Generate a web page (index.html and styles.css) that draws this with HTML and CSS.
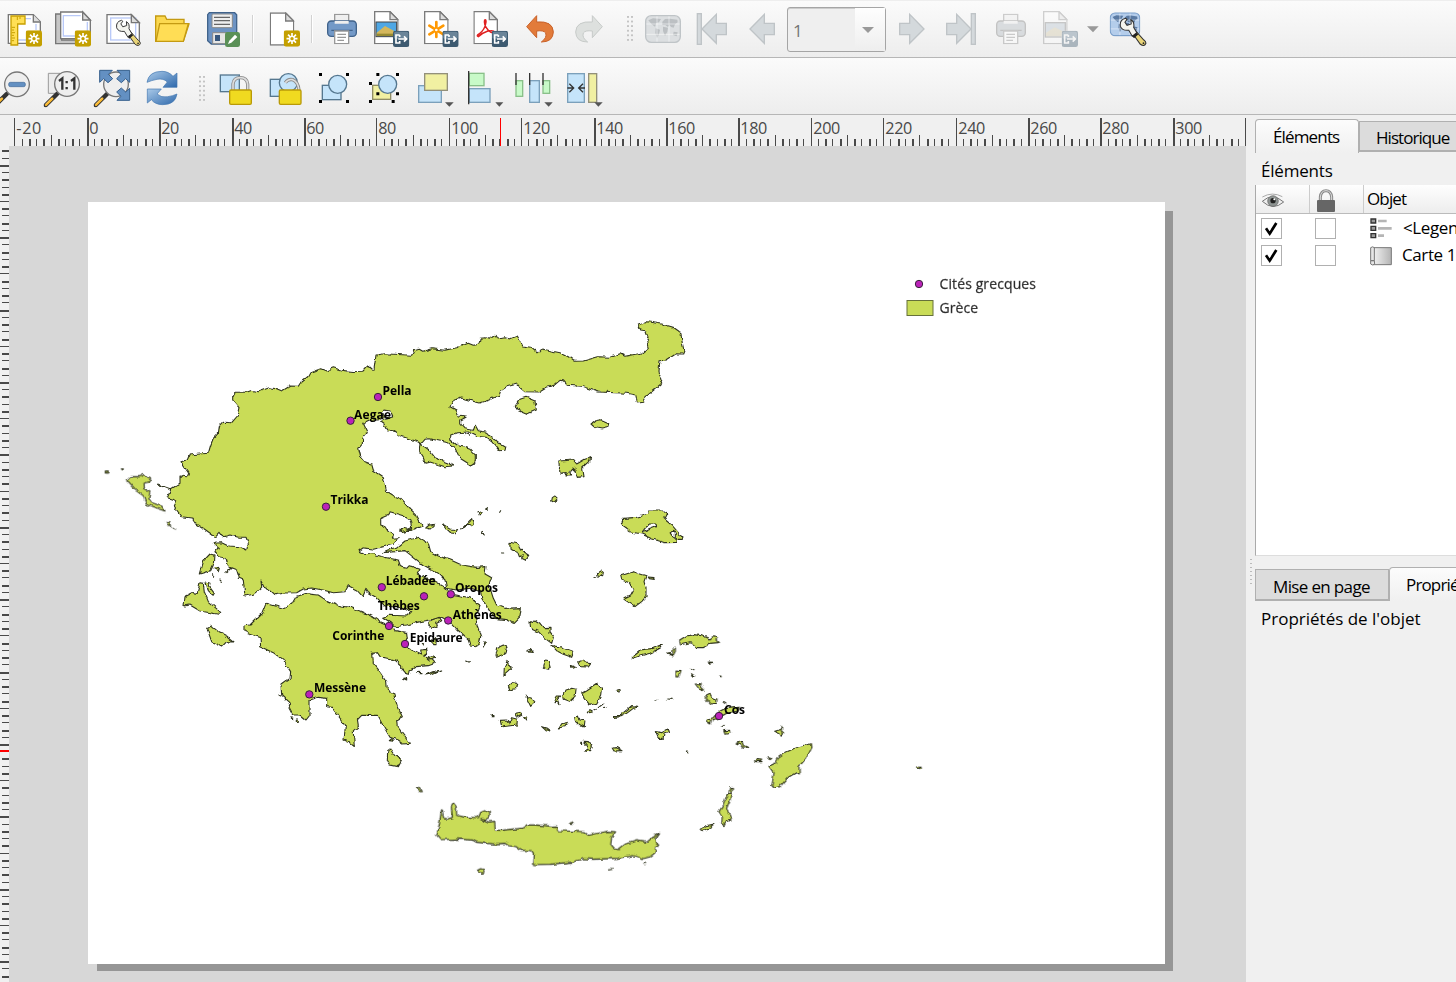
FILE: index.html
```html
<!DOCTYPE html>
<html lang="fr">
<head>
<meta charset="utf-8">
<title>Mise en page</title>
<link rel="stylesheet" href="styles.css">
</head>
<body>
<svg class="defs" width="0" height="0">
  <defs>
    <linearGradient id="gSync" x1="0" y1="0" x2="1" y2="1"><stop offset="0" stop-color="#a9c9e8"/><stop offset="1" stop-color="#2f69ac"/></linearGradient>
    <linearGradient id="gRoll" x1="0" x2="1"><stop offset="0" stop-color="#f4f4f4"/><stop offset="1" stop-color="#b4b4b4"/></linearGradient>
    <filter id="coast" filterUnits="userSpaceOnUse" x="88" y="300" width="860" height="600" color-interpolation-filters="sRGB"><feTurbulence type="fractalNoise" baseFrequency="0.16" numOctaves="2" seed="4" result="n"/><feDisplacementMap in="SourceGraphic" in2="n" scale="4.500" xChannelSelector="R" yChannelSelector="G"/></filter>
    <symbol id="star" viewBox="0 0 49 49"><rect width="49" height="49" rx="7" fill="#c4a000"/><path d="M25 8V41M8.500 25H41.500M13 13L37 37M37 13L13 37" stroke="#fff" stroke-width="5"/><circle cx="25" cy="25" r="9" fill="#fff"/><circle cx="25" cy="25" r="5" fill="#c4a000"/></symbol>
    <symbol id="export" viewBox="0 0 49 49"><rect width="49" height="49" rx="7" fill="#3d5a70"/><rect x="3" y="3" width="43" height="22" rx="5" fill="#6b8599"/><path d="M20 13H9V37H20V31M20 13V19M16 25H39M33 17L41 25L33 33" fill="none" stroke="#fff" stroke-width="5"/></symbol>
    <symbol id="wrench" viewBox="0 0 80 86"><path d="M30 36L60 78Q72 86 76 75Q76 70 70 66L38 30Z" fill="#e9d478" stroke="#333" stroke-width="3"/><path d="M3 27Q0 8 18 4L22 7L16 15L22 24L34 20L33 8Q44 14 41 30L50 45L37 55L27 38Q8 40 3 27Z" fill="#f4f4ee" stroke="#333" stroke-width="3"/><path d="M37 55L50 45L54 50L42 61Z" fill="#222"/><circle cx="69" cy="75" r="2.500" fill="#222"/></symbol>
    <symbol id="page" viewBox="0 0 74 100"><path d="M2 2H48L72 26V98H2Z" fill="#fff" stroke="#7b7b7b" stroke-width="4"/><path d="M48 2V26H72Z" fill="#ddd" stroke="#7b7b7b" stroke-width="4"/></symbol>
    <symbol id="handle" viewBox="0 0 50 50"><path d="M6 44L40 10" stroke="#333" stroke-width="13" stroke-linecap="round"/><path d="M7 43L26 24" stroke="#fdb92c" stroke-width="7" stroke-linecap="round"/><path d="M5 41L25 21" stroke="#ffe08b" stroke-width="2"/></symbol>
    <symbol id="world" viewBox="0 0 108 84"><rect x="2" y="2" width="104" height="80" rx="17" fill="var(--sea)" stroke="var(--rim)" stroke-width="4"/><path d="M10 16L24 10 48 12 42 22 34 24 30 35 20 28ZM32 40L45 44 42 58 36 70 31 54ZM52 20L60 12 75 11 97 14 98 22 90 28 86 38 78 36 74 30 69 36 61 30 52 30ZM54 35L69 38 67 50 60 63 54 48ZM86 50L98 52 95 64 84 60Z" fill="var(--land)"/><path d="M4 27H104M4 58H104M36 4V80M72 4V80" stroke="#fff" stroke-width="2" opacity=".8"/></symbol>
    <symbol id="printer" viewBox="0 0 92 92"><rect x="24" y="2" width="42" height="34" fill="#efefef" stroke="#999" stroke-width="4"/><rect x="3" y="22" width="86" height="46" rx="11" fill="var(--body)" stroke="var(--edge)" stroke-width="4"/><path d="M24 22H66V30H24Z" fill="#eee"/><path d="M14 50H78" stroke="var(--edge)" stroke-width="4"/><path d="M24 52H66V90H24Z" fill="#fff" stroke="#999" stroke-width="4"/><path d="M32 62H58M32 71H58M32 80H52" stroke="#999" stroke-width="4"/></symbol>
  </defs>
</svg>

<div class="toolbar toolbar-top">
  <svg class="tool" viewBox="0 0 150 174"><path d="M25 44H100L121 65V130H25Z" fill="#fff" stroke="#777" stroke-width="4"/><path d="M75 56H93M50 120H80M108 72V90" stroke="#b9c9f8" stroke-width="4"/><path d="M100 44V66H121" fill="#ddd" stroke="#777" stroke-width="4"/><path d="M33 48H75V72H53V135H33Z" fill="#ffdf55" stroke="#c8a000" stroke-width="4"/><path d="M35 82H45M35 90H42M35 98H45M35 106H42M35 114H45M35 122H42M52 50V60M60 50V57" stroke="#c8a000" stroke-width="3"/><use href="#star" x="77" y="91" width="49" height="49"/></svg>
  <svg class="tool" viewBox="150 0 150 174"><path d="M167 42H185V120H240V131H167Z" fill="#c6c6c6" stroke="#777" stroke-width="4"/><path d="M182 36H248L271 60V116H182Z" fill="#fff" stroke="#777" stroke-width="4"/><path d="M242 47H190V108H262V66" fill="none" stroke="#b9c9f8" stroke-width="4"/><path d="M248 36V60H271Z" fill="#ddd" stroke="#777" stroke-width="4"/><use href="#star" x="224" y="91" width="49" height="49"/></svg>
  <svg class="tool" viewBox="300 0 150 174"><path d="M321 44H394L418 68V130H321Z" fill="#fff" stroke="#777" stroke-width="4"/><rect x="332" y="54" width="75" height="66" fill="none" stroke="#b9c9f8" stroke-width="4"/><path d="M394 44V68H418Z" fill="#ddd" stroke="#777" stroke-width="4"/><use href="#wrench" x="347" y="57" width="78" height="84"/></svg>
  <svg class="tool" viewBox="450 0 150 174"><path d="M467 48H495L500 58H552V72H567L550 124H467Z" fill="#fbd850" stroke="#c49a12" stroke-width="4"/><path d="M479 71H565L550 124H468Z" fill="#ffdd55" stroke="#c49a12" stroke-width="4"/></svg>
  <svg class="tool" viewBox="600 0 150 174"><path d="M628 38H704L710 44V126L704 132H634L623 122V44Z" fill="#6d93c3" stroke="#41638b" stroke-width="4"/><rect x="636" y="42" width="61" height="41" rx="3" fill="#eee" stroke="#888" stroke-width="3"/><path d="M642 52H690M642 62H690M642 73H690" stroke="#666" stroke-width="4"/><path d="M638 98H694V131H638Z" fill="#e5e5e5" stroke="#888" stroke-width="3"/><rect x="645" y="105" width="15" height="18" fill="#37577e"/><rect x="675" y="96" width="45" height="45" rx="7" fill="#5a9057"/><path d="M684 132L688 122L705 104L712 111L694 128Z" fill="#fff"/></svg>
  <span class="rule"></span>
  <svg class="tool" viewBox="780 0 150 174"><use href="#page" x="809" y="37" width="74" height="100"/><use href="#star" x="851" y="91" width="49" height="49"/></svg>
  <span class="rule rule-b"></span>
  <svg class="tool blue" viewBox="951 0 150 174"><use href="#printer" x="980" y="41" width="92" height="92"/></svg>
  <svg class="tool" viewBox="-39 0 150 174"><use href="#page" x="-18" y="33" width="74" height="100"/><rect x="-12" y="66" width="62" height="44" fill="#4fa7e4" stroke="#444" stroke-width="3"/><path d="M-10 98L15 78L48 96V108H-10Z" fill="#d4b75c"/><path d="M-10 101H48V108H-10Z" fill="#968a32"/><use href="#export" x="39" y="92" width="49" height="49"/></svg>
  <svg class="tool" viewBox="111 0 150 174"><use href="#page" x="132" y="33" width="74" height="100"/><path d="M169 66V111M148 77L190 103M190 77L148 103" stroke="#ff9800" stroke-width="8" stroke-linecap="round"/><circle cx="169" cy="90" r="4" fill="#fff"/><use href="#export" x="187" y="92" width="49" height="49"/></svg>
  <svg class="tool" viewBox="261 0 150 174"><use href="#page" x="280" y="33" width="74" height="100"/><path d="M295 110Q288 107 297 102Q315 90 318 66Q318 57 314 60Q310 74 325 91Q338 102 344 96Q340 89 322 94Q308 98 295 110Z" fill="none" stroke="#e02020" stroke-width="4.500"/><use href="#export" x="335" y="92" width="49" height="49"/></svg>
  <svg class="tool" viewBox="411 0 150 174"><path d="M440 80L470 47V66Q519 62 520 96Q519 126 484 126Q502 113 497 99Q491 90 470 93V113Z" fill="#e27b3a" stroke="#c9622a" stroke-width="3"/></svg>
  <svg class="tool" viewBox="561 0 150 174"><path d="M667 80L637 47V66Q588 62 587 96Q588 126 623 126Q605 113 610 99Q616 90 637 93V113Z" fill="#dde0de" stroke="#c7cbc9" stroke-width="3"/></svg>
  <span class="grip"></span>
  <svg class="tool world-off" viewBox="774 0 150 174"><use href="#world" x="795" y="45" width="108" height="84"/></svg>
  <svg class="tool off" viewBox="924 0 150 174"><rect x="952" y="41" width="12" height="92"/><path d="M966 87L1009 43V70H1039V104H1009V130Z"/></svg>
  <svg class="tool tool-narrow off" viewBox="1074 0 147 174"><path d="M1110 87L1153 43V70H1183V104H1153V130Z"/></svg>
  <div class="combo"><span class="combo-value">1</span><span class="combo-arrow"></span></div>
  <svg class="tool off" viewBox="378 0 150 174"><path d="M492 87L449 43V70H419V104H449V130Z"/></svg>
  <svg class="tool off" viewBox="528 0 150 174"><rect x="634" y="41" width="12" height="92"/><path d="M633 87L590 43V70H560V104H590V130Z"/></svg>
  <svg class="tool pale" viewBox="678 0 150 174"><use href="#printer" x="707" y="41" width="92" height="92"/></svg>
  <svg class="tool" viewBox="828 0 150 174"><g opacity=".32"><use href="#page" x="849" y="33" width="74" height="100"/><rect x="856" y="68" width="60" height="43" fill="#a8b9c6" stroke="#666" stroke-width="4"/><path d="M858 98L884 82L914 97V109H858Z" fill="#c9bd96"/></g><rect x="905" y="92" width="49" height="49" rx="7" fill="#eee"/><use href="#export" x="905" y="92" width="49" height="49" opacity=".38"/></svg>
  <svg class="tool tool-arrow" viewBox="978 0 51 174"><path d="M981 79H1016L999 97Z" fill="#999"/></svg>
  <svg class="tool world-on" viewBox="1029 0 150 174"><use href="#world" x="1049" y="36" width="92" height="74"/><use href="#wrench" x="1078" y="50" width="84" height="92"/></svg>
</div>

<div class="toolbar toolbar-bottom">
  <svg class="tool tool-cut" viewBox="0 174 120 171"><use href="#handle" x="-20" y="272" width="50" height="50"/><circle cx="51" cy="253" r="37" fill="#eee" stroke="#777" stroke-width="4"/><rect x="26" y="247" width="50" height="13" rx="5" fill="#6390c2" stroke="#426a98" stroke-width="2"/></svg>
  <svg class="tool" viewBox="120 174 150 171"><path d="M145 220H180V280H145Z" fill="#ececec" stroke="#999" stroke-width="3"/><use href="#handle" x="131" y="272" width="50" height="50"/><circle cx="201" cy="252" r="37" fill="#eee" stroke="#777" stroke-width="4"/><path d="M177 243L187 235V269M213 243L223 235V269" fill="none" stroke="#333" stroke-width="7"/><path d="M200 243V250M200 261V268" stroke="#333" stroke-width="7"/></svg>
  <svg class="tool" viewBox="270 174 150 171"><use href="#handle" x="281" y="272" width="50" height="50"/><circle cx="348" cy="253" r="37" fill="#eee" stroke="#777" stroke-width="4"/><g fill="#6390c2" stroke="#365f8d" stroke-width="3"><path d="M299 211H337L325 223L338 236L324 248L311 236L299 247Z"/><path d="M389 211H351L363 223L350 236L364 248L377 236L389 247Z"/><path d="M389 301H351L363 289L350 276L364 264L377 276L389 265Z"/></g></svg>
  <svg class="tool" viewBox="420 174 150 171"><path d="M441 247Q446 214 486 214Q506 214 519 229L531 219V262H489L502 246Q490 234 471 238Q455 241 441 247Z" fill="url(#gSync)" stroke="#4277b1" stroke-width="2"/><path d="M531 282Q526 314 488 314Q466 314 454 299L442 309V267H484L471 282Q484 294 503 290Q518 288 531 282Z" fill="url(#gSync)" stroke="#4277b1" stroke-width="2"/></svg>
  <span class="grip grip-b"></span>
  <svg class="tool" viewBox="636 174 150 171"><rect x="661" y="225" width="57" height="50" fill="#c5e4fa" stroke="#55778f" stroke-width="4"/><path d="M699 272V252Q701 233 721 233Q741 233 743 252V272" fill="none" stroke="#888" stroke-width="10"/><path d="M699 272V252Q701 233 721 233Q741 233 743 252V272" fill="none" stroke="#ddd" stroke-width="5"/><rect x="689" y="270" width="65" height="43" rx="4" fill="#f0da20" stroke="#b99a08" stroke-width="4"/></svg>
  <svg class="tool" viewBox="786 174 150 171"><rect x="811" y="238" width="50" height="51" fill="#c5e4fa" stroke="#55778f" stroke-width="4"/><circle cx="865" cy="248" r="27" fill="#c5e4fa" stroke="#55778f" stroke-width="4"/><path d="M856 248Q864 236 878 239Q895 245 897 272" fill="none" stroke="#888" stroke-width="10"/><path d="M856 248Q864 236 878 239Q895 245 897 272" fill="none" stroke="#ddd" stroke-width="5"/><rect x="838" y="270" width="65" height="43" rx="4" fill="#f0da20" stroke="#b99a08" stroke-width="4"/></svg>
  <svg class="tool" viewBox="936 174 150 171"><rect x="967" y="256" width="56" height="43" fill="#c5e4fa" stroke="#55778f" stroke-width="4"/><circle cx="1013" cy="253" r="27" fill="#c5e4fa" stroke="#55778f" stroke-width="4"/><path d="M957 219h9v9h-9zM1038 219h9v9h-9zM957 300h9v9h-9zM1038 300h9v9h-9z"/></svg>
  <svg class="tool" viewBox="1086 174 150 171"><rect x="1118" y="256" width="54" height="42" fill="#f1f0a2" stroke="#908d65" stroke-width="4"/><circle cx="1163" cy="253" r="27" fill="#c5e4fa" stroke="#55778f" stroke-width="4"/><path d="M1129 219h9v9h-9zM1188 219h9v9h-9zM1107 246h9v9h-9zM1129 277h9v9h-9zM1188 277h9v9h-9zM1107 300h9v9h-9zM1175 300h9v9h-9z"/></svg>
  <svg class="tool" viewBox="96 174 150 171"><rect x="116" y="257" width="68" height="50" fill="#c5e4fa" stroke="#7ba0bb" stroke-width="4"/><rect x="134" y="221" width="68" height="50" fill="#f1f0a2" stroke="#93907a" stroke-width="4"/><path class="more" d="M195 307H221L208 320Z"/></svg>
  <svg class="tool" viewBox="246 174 150 171"><rect x="268" y="220" width="44" height="37" fill="#c8fac8" stroke="#89c089" stroke-width="4"/><rect x="268" y="266" width="62" height="41" fill="#c5e4fa" stroke="#7ba0bb" stroke-width="4"/><path d="M266 213V313" stroke="#333" stroke-width="4"/><path class="more" d="M346 307H370L358 320Z"/></svg>
  <svg class="tool" viewBox="396 174 150 171"><rect x="408" y="242" width="20" height="47" fill="#c8fac8" stroke="#89c089" stroke-width="4"/><rect x="449" y="242" width="29" height="65" fill="#c5e4fa" stroke="#7ba0bb" stroke-width="4"/><rect x="489" y="242" width="20" height="38" fill="#c8fac8" stroke="#89c089" stroke-width="4"/><path d="M408 219V255M449 219V255M489 219V255" stroke="#333" stroke-width="4"/><path class="more" d="M493 307H518L506 320Z"/></svg>
  <svg class="tool" viewBox="546 174 150 171"><rect x="563" y="221" width="50" height="86" fill="#c5e4fa" stroke="#7ba0bb" stroke-width="4"/><rect x="626" y="221" width="24" height="86" fill="#f1f0a2" stroke="#93907a" stroke-width="4"/><path d="M562 264H580M568 251L581 264L568 277M615 264H597M609 251L596 264L609 277" fill="none" stroke="#333" stroke-width="4"/><path class="more" d="M643 307H668L655 320Z"/></svg>
</div>

<main class="workspace">
  <section class="view">
    <svg class="ruler-h" id="rulerH" width="1246" height="31" viewBox="0 115 1246 31"></svg>
    <div class="view-body">
      <svg class="ruler-v" id="rulerV" width="9" height="836" viewBox="0 146 9 836"></svg>
      <svg class="canvas" width="1237" height="836" viewBox="9 146 1237 836">
        <rect x="97" y="211" width="1076" height="760" fill="#969696"/>
        <rect x="88" y="202" width="1077" height="762" fill="#fff"/>
        <g class="land" filter="url(#coast)">
          <path d="M233.700 392.300L246.700 392.300 252 390.300 258.300 391.700 269.300 387.700 276.700 388.700 282 391 290 386 298.300 386.300 301 382 307.700 376.700 310 372.700 320.700 368.700 326 371 333.300 367.700 341.700 370.300 352 371.500 362.700 371.300 367.700 366 371 369 374 369.300 376 355 385 353.700 411.700 355.300 414 350.700 419.300 349.300 422.700 351.300 431.700 348.700 445 350.300 456.700 347.700 468.300 343.300 473.300 345.300 479 344 480 338.300 486 337.700 489.300 339.300 495 335.300 497.300 339.300 505 337.700 510 339 517.300 336 520 340.700 522.700 346 531.700 347.300 538.300 353 541.700 349 560 352.700 568.300 356.700 574.300 361.300 583.300 361 598.300 356.700 610 357.300 620 353.700 625 356.300 643.300 352.700 648.300 348.300 646.700 341.700 648 337.300 645.700 330.700 640.700 330 639 325.300 646.700 321.700 661.700 324 673.300 327.300 681 332.700 682 341.700 684 350.700 682.700 354 676 353.700 666.700 360 660 360.700 659 370 659.500 375 662 379.300 660 385 651.700 391.700 645.300 397.300 642.700 401.300 637.300 402 635.700 395 626.700 393.300 598.300 392 581.700 386.300 567.300 385.300 563.300 380.700 560 380.300 554 385.300 546.700 387.300 539 392 525 391.700 520.700 388.300 517.300 384 506.700 386.700 500.700 390.700 499.300 395 489 400 480 403 472 401 461.700 398 454.300 400 450 406.700 456 410 459.300 416 466 417.300 460.700 420 460.700 424 465 428.700 473.300 430.300 475.300 425.300 478.300 430.700 486.700 432.300 491 437 496.700 441.700 505.700 447.300 505 450.300 499.300 450.700 491.700 441.700 486 437.300 476.700 436.300 468.300 432 456.700 432.700 450.700 435 450.700 440 456.700 444.700 470 449.300 475.300 455 475.300 461.700 470.700 465 460 458.300 455 448.300 448.300 442.700 430 438.700 425 439.300 421 444 429 450 435 457.700 448.300 462.700 454 466 445 466.700 430 462 425 463.300 423 458 420 453.300 421 444 418.300 442 400 435.700 393.300 430.700 387.700 430 385 425 380.700 421.700 385 419.300 392.700 417 390 411 384 410 382 414 386 417 378 420 369.300 420 362.700 423.300 367.300 432.700 362.700 438.300 362.300 444 358.700 448.300 360.700 456.700 365 461.700 371.700 464.300 373.300 470 383.300 476.700 386.700 491.700 391.700 495 400 498.300 410 509 416 514.300 422.300 526 410 530.700 400.700 532.700 400 529 404 530.700 411.700 527.300 410 520 403.300 515.700 390 511.700 389.300 515 380.700 518.700 380.700 525 385 526.700 388.300 531.700 393.300 535 392.300 538.300 399.300 537.700 393.300 544.300 383.300 546.700 373.300 549.300 363.300 547.700 359 550.700 364 553.300 373.300 554 384 557.300 398.300 560 400.700 566.700 406.700 568.300 409.300 565.700 420 569.300 417.300 574 423.300 577.300 433.300 580 443.300 586 451 594 470 597.700 480 605.300 478.300 610 475 615 477.300 626.700 480.700 636.700 478.700 646 470 645 468.300 640 456.700 630 448.300 620.700 441.700 617.300 436.700 618.700 420 621.700 406.700 625 395 626.700 391.700 623.300 382.700 617.300 389 615.300 406.700 616 411.700 611.700 405 608 385 606 376.700 597.700 368.300 592.700 366 589.300 362.700 596.700 356.700 590 348.300 585.700 345 591.700 333.300 592.700 323 590 311.700 588 303.300 589 296.700 592.700 285 593 275 594.700 270 590 264 587.300 261 581 261.700 587.300 253.300 594.300 245 596 243.300 580 239.300 578.300 236.700 570 228.300 566.700 226 558.300 218.300 556.700 215 551.700 218.300 547.700 213.300 543.300 221.700 542.700 228.300 546 240 546.700 246.700 550 248.300 543.300 246 537.300 238.300 537.300 230 535 223.300 536.700 220 532.300 215 537.300 212.700 535 203.300 528.300 193.300 521.700 193.300 518.300 181.700 516.700 176.700 510 174.300 506 176.700 500.700 167.300 497.700 170.700 490 157.300 484.300 171 489 180 483.300 180 476 187.300 476.700 188.700 473.300 181 461.700 187.300 460 189.300 455 208.300 453.300 210.700 445 213.300 438.300 218.300 433.300 219.300 426.700 223.300 422.300 231.700 422.700 238.300 415 240 407.700 233.700 400Z"/>
          <g transform="translate(80 310) scale(.33333)">
            <path d="M140 512L152 500 180 500 192 494 215 505 210 515 192 520 193 535 210 543 206 565 215 578 245 588 255 603 225 593 200 583 190 557 165 540ZM79 483H88L86 489H79ZM124 477H130L128 480ZM258 634L268 636 275 647 264 645ZM278 652L287 657Z"/>
          </g>
          <g transform="translate(360 310) scale(.33333)">
            <path d="M498 262L525 273 529 300 500 313 470 300 466 290 480 268ZM693 342L705 333 725 329 749 340 747 352 725 357 705 353ZM596 453L640 450 650 462 662 455 675 448 689 443 686 455 665 474 669 500 655 502 648 482 638 474 630 484 632 498 618 498 622 488 600 490ZM577 563L586 557 594 564 582 577 575 573ZM783 645L790 625 830 622 863 613 865 600 905 600 920 610 912 626 938 648 967 682 964 688 948 688 948 697 915 698 875 686 845 672 810 665ZM315 371L328 376 320 373ZM198 653L208 645 226 643 225 650 210 657ZM247 642L272 657 293 660 287 671 270 669 260 660ZM305 657L320 642 335 626 340 642 335 650 325 642ZM354 608L366 605 366 614 358 619ZM380 597L385 594 384 601ZM419 607L422 602ZM366 667L373 675ZM450 697L472 702 482 720 506 736 497 748 485 742 490 734 478 740 472 724 450 718ZM425 729H431ZM120 660L130 658 128 667 120 667ZM135 664L155 656 153 662Z"/>
            <path class="water" d="M845 668L855 655 868 642 888 642 890 650 870 658 858 664ZM930 668L942 661 946 672 946 686 938 680Z"/>
          </g>
          <g transform="translate(160 500) scale(.33333)">
            <path d="M317 310L370 325 395 313 408 290 435 281 475 285 500 302 540 318 575 323 605 335 640 352 665 370 685 378 700 383 705 392 740 398 742 415 735 432 745 447 785 465 782 450 800 448 803 460 790 468 808 470 826 490 805 497 768 500 750 510 748 523 735 520 722 505 722 495 705 480 675 473 662 472 652 458 638 460 640 490 660 515 680 545 682 568 700 580 712 618 727 650 710 660 712 680 735 708 751 730 728 732 712 720 690 712 670 678 652 646 605 646 592 660 595 680 580 692 583 740 565 725 552 720 556 680 545 660 515 622 500 620 500 595 475 592 450 600 450 645 438 660 420 645 398 645 385 620 390 608 365 585 363 555 390 535 392 515 370 482 340 458 302 440 300 410 255 395 255 377 270 375 305 340Z"/>
            <path d="M665 158L690 147 712 142 735 123 778 112 805 130 812 155 835 168 872 180 905 195 950 202 978 200 975 222 995 233 987 255 1000 295 1010 315 1035 325 1084 323 1080 350 1060 370 1035 358 1005 355 990 335 965 295 962 275 930 265 890 270 860 265 855 240 835 220 790 195 735 152 705 155Z"/>
            <path d="M150 162L162 165 160 195 152 212 118 222 128 185ZM162 205L178 202 175 212ZM198 218L208 208 213 205ZM158 224V229ZM180 240L184 244ZM138 245L150 250 148 260 163 280 158 288 145 275ZM120 248L130 250 133 275 145 305 180 335 175 343 120 333 90 315 72 318 75 290 98 278 112 280ZM140 382L152 376 175 395 200 408 222 426 200 425 185 441 155 425ZM683 752L690 747 705 768 727 778 715 800 690 795 682 780ZM357 585L362 588ZM393 650L398 656ZM406 660H412V667H406ZM688 722L695 716 700 724ZM803 375L815 360 838 352 845 362 830 370 832 378 815 385ZM815 425L828 415 828 434 818 434ZM784 434L790 430 790 435ZM805 475L815 470 825 475 812 480ZM728 535L740 534 740 540ZM770 517L786 518ZM796 525L818 515 842 510 815 522ZM975 422L979 425 969 442ZM920 483L928 487ZM967 98L971 102ZM720 97L730 85 750 90 728 97Z"/>
          </g>
          <g transform="translate(370 530) scale(.33333)">
            <path d="M480 278L495 270 510 280 520 293 540 292 540 308 550 322 545 340 525 325 505 305 482 295ZM546 347L575 351 612 365 605 382 580 373 560 362ZM378 375L383 353 400 345 411 352 402 372 380 382ZM405 408L411 394 415 406 427 411 415 425 402 436 403 412ZM522 405L527 390 537 392 543 410 532 418 520 415ZM470 363L485 358 490 364ZM415 466L425 458 440 460 437 476 420 480ZM467 499L485 505 495 516 482 529ZM552 515L562 498 572 498 562 508 567 521 558 514ZM578 500L585 480 605 475 618 478 615 502 600 515 580 508ZM635 488L650 480 680 460 695 475 692 498 680 520 658 526 642 505ZM626 395L640 390 643 396 662 398 655 408 632 407ZM600 406L616 412 609 415ZM739 480L750 479 751 486 742 485ZM391 571L410 570 418 578 425 563 442 568 441 585 395 591ZM437 550L452 547 455 556 443 562ZM460 560L470 562 467 570ZM366 557H372V560H366ZM515 590L530 595 540 603 525 599ZM568 594L575 581 595 577 585 590ZM614 562L625 558 630 570 645 573 643 591 630 584 616 572ZM632 640H638ZM643 634L655 635 667 650 662 665 640 663 655 658 652 645ZM727 655L740 653 756 662 732 663ZM652 547L660 542 667 546 656 551ZM674 540L679 538ZM685 533L699 522ZM702 532L713 534ZM731 557L750 556 770 540 785 527 808 530 790 535 770 550 750 560 735 562ZM856 513L862 511ZM752 137L790 125 828 137 822 155 828 175 828 200 815 215 795 230 762 208 765 203 782 195 790 180 778 158 755 150ZM835 141L852 143 853 148 838 146ZM682 128L690 123 700 130 698 140 685 138ZM670 142L676 139ZM785 383L795 372 810 360 850 355 877 344 870 355 840 370 810 378 790 385ZM856 605L875 608 895 597 898 606 882 612 880 625 865 625Z"/>
          </g>
          <g transform="translate(580 490) scale(.33333)">
            <path d="M299 450L320 437 345 434 370 438 390 447 398 440 412 443 408 450 415 458 390 460 370 473 350 473 330 458 302 465ZM385 516L400 517 388 520ZM262 489L272 488 277 492 280 478 286 474 286 484 280 495ZM288 540L303 542 297 558 288 558ZM332 535L339 539ZM332 552L347 558 335 558ZM419 558H423V561ZM346 582L358 581 365 592 373 600 362 603ZM375 620L390 613 400 625 411 627 410 640 390 642 382 632ZM430 637L438 642ZM383 687L400 683 410 670 440 655 480 652 478 662 440 670 415 685 395 690 392 702 382 698ZM426 710L433 706ZM431 722L448 721 450 730 435 733ZM469 760L485 754 490 765 505 772 490 775 482 764ZM584 724L600 719 605 709 604 723 611 728 604 739 600 731ZM524 812L530 809 548 810 545 815 526 815ZM565 800L572 802 568 806ZM567 829L585 820 595 802 615 788 650 772 694 761 696 772 680 803 657 830 658 852 648 848 625 862 600 890 583 895 575 886 582 850ZM450 905L452 893 457 892 457 904ZM442 912L455 908 450 930 440 955 445 970 456 990 440 995 432 1007 425 1002 427 980 417 965 430 945ZM364 1018L375 1008 402 1002 385 1015 368 1022ZM1013 831L1020 828 1021 835 1015 836ZM320 783H326V787ZM225 633L233 630ZM263 627L277 628Z"/>
          </g>
          <g transform="translate(380 740) scale(.33333)">
            <path d="M183 218L187 210 190 232 203 237 217 232 214 200 221 190 229 200 230 226 250 231 295 233 302 217 315 212 328 217 330 230 318 238 302 236 325 246 344 244 346 270 365 271 425 265 440 255 470 255 515 259 530 258 533 272 612 275 625 286 680 274 707 275 695 292 692 315 700 325 715 329 735 313 770 302 800 307 820 290 836 281 828 292 829 308 836 312 828 322 825 338 810 351 790 356 760 347 715 355 640 358 610 356 580 366 510 373 461 374 463 342 455 332 420 331 405 320 385 317 375 310 340 312 290 307 280 301 240 297 182 299 170 285 176 262 180 240ZM109 142L117 143 124 155 117 155ZM292 391L302 386 312 389 310 399 302 399ZM568 249L574 244 580 250ZM687 387L697 385ZM792 370H797Z"/>
          </g>
        </g>
        <g class="city">
          <circle cx="378" cy="397" r="3.700"/><circle cx="350.500" cy="420.700" r="3.700"/><circle cx="326" cy="506.700" r="3.700"/><circle cx="381.800" cy="587.200" r="3.700"/><circle cx="450.800" cy="594.200" r="3.700"/><circle cx="424" cy="596.300" r="3.700"/><circle cx="448.200" cy="620.500" r="3.700"/><circle cx="389" cy="626" r="3.700"/><circle cx="405" cy="644" r="3.700"/><circle cx="309.300" cy="694.400" r="3.700"/><circle cx="719" cy="716" r="3.700"/><circle cx="919" cy="284" r="3.700"/>
        </g>
        <g class="city-name">
          <text x="382.500" y="395.300" textLength="29">Pella</text>
          <text x="354" y="419.300" textLength="37">Aegae</text>
          <text x="330.500" y="504.300" textLength="38">Trikka</text>
          <text x="385.700" y="584.700" textLength="50">Lébadée</text>
          <text x="455" y="592" textLength="43">Oropos</text>
          <text x="377.700" y="610.300" textLength="42">Thèbes</text>
          <text x="452.700" y="618.700" textLength="49">Athènes</text>
          <text x="332.300" y="640.300" textLength="52">Corinthe</text>
          <text x="409.700" y="641.500" textLength="53">Epidaure</text>
          <text x="314" y="692" textLength="52">Messène</text>
          <text x="724" y="713.500" textLength="21">Cos</text>
        </g>
        <rect x="907" y="300.500" width="26" height="15" fill="#c9dc57" stroke="#66713a"/>
        <g class="legend">
          <text x="939.500" y="289" textLength="96.500">Cités grecques</text>
          <text x="939.500" y="313" textLength="38.500">Grèce</text>
        </g>
      </svg>
    </div>
  </section>

  <aside class="dock">
    <div class="tabs tabs-top"><span class="tab active">Éléments</span><span class="tab wide">Historique</span></div>
    <div class="dock-title">Éléments</div>
    <div class="tree">
      <div class="tree-row tree-head">
        <span class="cell"><svg width="24" height="18" viewBox="0 0 72 54"><path d="M4 28Q34 0 68 30Q36 58 4 28Z" fill="#eee" stroke="#777" stroke-width="3"/><path d="M4 15Q34 -2 64 14" fill="none" stroke="#aaa" stroke-width="3"/><circle cx="36" cy="27" r="16" fill="#8d9391" stroke="#666" stroke-width="2"/><circle cx="36" cy="26" r="8" fill="#222"/><circle cx="40" cy="22" r="3" fill="#fff"/></svg></span>
        <span class="cell"><svg width="18" height="23" viewBox="0 0 54 69"><path d="M10 36V24Q12 5 27 5Q42 5 44 24V36" fill="none" stroke="#888" stroke-width="9"/><path d="M10 36V24Q12 5 27 5Q42 5 44 24V36" fill="none" stroke="#ddd" stroke-width="3"/><rect y="33" width="54" height="36" rx="3" fill="#666"/></svg></span>
        <span class="cell cell-name">Objet</span>
      </div>
      <div class="tree-row">
        <span class="cell"><i class="check"><svg width="19" height="19" viewBox="0 0 57 57"><path d="M12 28L23 44L43 12" fill="none" stroke="#000" stroke-width="8"/></svg></i></span>
        <span class="cell"><i class="check"></i></span>
        <span class="cell cell-item"><svg width="22" height="21" viewBox="0 0 66 63"><path d="M3 3h14v12H3zM3 25h14v12H3zM3 47h14v12H3z" fill="#999" stroke="#333" stroke-width="4"/><path d="M24 9H50M24 31H65M24 53H42" stroke="#b5b5b5" stroke-width="8"/></svg><span class="nm">&lt;Legend&gt;</span></span>
      </div>
      <div class="tree-row">
        <span class="cell"><i class="check"><svg width="19" height="19" viewBox="0 0 57 57"><path d="M12 28L23 44L43 12" fill="none" stroke="#000" stroke-width="8"/></svg></i></span>
        <span class="cell"><i class="check"></i></span>
        <span class="cell cell-item"><svg width="22" height="20" viewBox="0 0 66 60"><path d="M12 5H64V56H8Z" fill="url(#gRoll)" stroke="#777" stroke-width="3"/><path d="M2 5Q8 0 13 5V44H2ZM2 44V54Q6 59 14 55L13 44Z" fill="#e6e6e6" stroke="#777" stroke-width="3"/></svg><span class="nm nm-b">Carte 1</span></span>
      </div>
    </div>
    <div class="dock-gap"><span class="dots"></span></div>
    <div class="tabs tabs-low"><span class="tab first">Mise en page</span><span class="tab active wide">Propriétés de l'objet</span></div>
    <div class="dock-title low">Propriétés de l'objet</div>
  </aside>
</main>
<script src="rulers.js"></script>
</body>
</html>
```
FILE: styles.css
```css
* { box-sizing: border-box; }
body { margin: 0; width: 1456px; height: 982px; overflow: hidden; display: flex; flex-direction: column; background: #f0f0f0; font-family: "Open Sans", "Noto Sans", sans-serif; font-size: 17px; color: #000; }
svg { display: block; flex: none; }
.defs { position: absolute; }
.toolbar { display: flex; flex: none; align-items: flex-start; background: linear-gradient(#fbfbfb, #ededed); }
.toolbar-top { height: 58px; border-bottom: 1px solid #b6b6b6; box-shadow: inset 0 1px #eee; }
.toolbar-bottom { height: 57px; border-bottom: 1px solid #b6b6b6; }
.tool { width: 50px; height: 58px; }
.toolbar-bottom .tool { height: 57px; }
.tool-narrow { width: 49px; }
.tool-arrow { width: 17px; }
.toolbar .tool-cut { width: 40px; }
.off rect, .off path { fill: #d4d9dc; stroke: #bfc4c7; stroke-width: 4; }
.more { fill: #555; }
.blue { --body: #7399c7; --edge: #41638b; }
.pale { --body: #b9c0c5; --edge: #888; opacity: .45; }
.world-off { --sea: #dcdfe1; --rim: #bfc4c7; --land: #bcc0c3; }
.world-on { --sea: #b5cdec; --rim: #7b9fca; --land: #5a7ba3; }
.rule { flex: none; width: 2px; height: 28px; margin: 15px 6px 0 2px; background: linear-gradient(90deg, #d2d2d2 50%, #fff 50%); }
.rule-b { margin: 15px 4px 0 1px; }
.grip { flex: none; width: 6px; height: 26px; margin: 16px 5px 0 10px; background-image: radial-gradient(circle at 1px 1px, #c4c4c4 .8px, transparent 1px); background-size: 4px 4.6px; }
.grip-b { margin: 18px 7px 0 9px; }
.combo { flex: none; width: 99px; height: 45px; margin-top: 7px; display: flex; border: 1px solid #a5a5a5; border-radius: 3px; background: #efefef; box-shadow: inset 0 1px #ccc; }
.combo-value { width: 67px; padding: 11px 0 0 5px; color: #757575; font-size: 17px; line-height: 24px; }
.combo-arrow { flex: 1; background: linear-gradient(#fefefe, #eee); }
.combo-arrow::after { content: ""; display: block; width: 0; margin: 19px 0 0 7px; border: 6px solid transparent; border-top-color: #999; border-bottom: 0; }

.workspace { flex: 1; display: flex; min-height: 0; }
.view { width: 1246px; flex: none; display: flex; flex-direction: column; }
.view-body { display: flex; }
.canvas { background: #d7d7d7; }
.tick { fill: #4a4a4a; }
.tick-red { fill: #f00; }
.tick-text { font: 16.200px "Open Sans", sans-serif; fill: #484848; }
.land path { fill: #c9dc57; stroke: #30341f; stroke-width: 1.1; vector-effect: non-scaling-stroke; stroke-linejoin: round; }
.land .water { fill: #fff; }
.city circle { fill: #bb22b8; stroke: #37213a; stroke-width: 1; }
.city-name { font: bold 12px "Open Sans", sans-serif; }
.legend { font: 14px "Open Sans", sans-serif; fill: #222; stroke: #555; stroke-width: .3px; }

.dock { width: 210px; flex: none; padding: 4px 0 0 9px; display: flex; flex-direction: column; overflow: hidden; white-space: nowrap; }
.tabs { display: flex; align-items: flex-end; height: 34px; flex: none; }
.tab { flex: none; width: 104px; height: 31px; line-height: 31px; padding-left: 17px; background: #dcdcdc; border: 1px solid #b0b0b0; border-bottom-width: 2px; letter-spacing: -.85px; }
.tab.active { height: 34px; line-height: 34px; background: linear-gradient(#fcfcfc, #f0f0f0); border-bottom: 0; border-radius: 4px 4px 0 0; }
.tab.wide { width: 220px; padding-left: 16px; }
.tabs-top .tab.wide { margin-bottom: 1px; letter-spacing: -.95px; }
.tab.first { width: 134px; height: 32px; padding-left: 17px; line-height: 33px; letter-spacing: -.65px; }
.dock-title { flex: none; height: 32px; padding-left: 6px; line-height: 35px; letter-spacing: -.2px; }
.dock-title.low { letter-spacing: 0; }
.tree { flex: none; height: 371px; background: #fff; border-left: 1px solid #aaa; border-bottom: 1px solid #ddd; }
.tree-row { display: flex; height: 27px; }
.tree-row + .tree-row { align-items: center; }
.tree-head { height: 29px; margin-bottom: 1px; background: linear-gradient(#fefefe, #ededed); border-bottom: 1px solid #bbb; }
.cell { width: 54px; flex: none; display: flex; align-items: center; padding-left: 5px; }
.tree-head .cell { border-right: 1px solid #ccc; padding-top: 3px; }
.tree-head .cell + .cell { padding-left: 7px; }
.tree-head .cell + .cell-name { width: 120px; padding: 0 0 1px 3px; letter-spacing: -.85px; }
.cell-item { width: 130px; padding-left: 6px; }
.check { width: 21px; height: 21px; border: 1px solid #b0b0b0; background: #fff; display: block; }
.nm { margin: -2px 0 0 11px; letter-spacing: -.4px; }
.nm-b { margin-left: 10px; }
.dock-gap { height: 11px; flex: none; }
.dots { display: block; width: 2px; height: 26px; margin: 3px 0 0 -5px; background: repeating-linear-gradient(#bbb 0 1px, transparent 1px 4px); }
```
FILE: rulers.js
```js
const NS = "http://www.w3.org/2000/svg";
const STEP = 7.24; // two millimetres
const rulerH = document.getElementById("rulerH");
const rulerV = document.getElementById("rulerV");

function bar(parent, x, y, w, h, cls) {
  const r = document.createElementNS(NS, "rect");
  r.setAttribute("x", x);
  r.setAttribute("y", y);
  r.setAttribute("width", w);
  r.setAttribute("height", h);
  r.setAttribute("class", cls || "tick");
  parent.appendChild(r);
}

const thinMajors = [-20, 80, 100, 120, 200, 220, 240];

for (let i = -10; i < 160; i++) {
  const x = Math.floor(87.2 + i * STEP);
  if (x > 1243) break;
  const major = i % 10 === 0;
  const top = major ? 118 : i % 5 === 0 ? 135 : 139;
  const thin = major ? thinMajors.includes(i * 2) : i % 2 !== 0;
  bar(rulerH, x, top, thin ? 1 : 2, 146 - top);
  if (major) {
    const t = document.createElementNS(NS, "text");
    const label = String(i * 2);
    t.setAttribute("x", x + 2.3);
    t.setAttribute("y", 134);
    t.setAttribute("class", "tick-text");
    t.setAttribute("textLength", label === "-20" ? 25 : label.length * 9);
    t.textContent = label;
    rulerH.appendChild(t);
  }
}
bar(rulerH, 500, 118, 1, 28, "tick-red");
bar(rulerH, 1245, 118, 1, 28);

for (let j = -7; j < 108; j++) {
  const y = Math.round(201 + j * STEP);
  const x = j % 5 === 0 ? 0 : 2;
  bar(rulerV, x, y, 9 - x, j % 2 === 0 ? 1 : 2);
}
bar(rulerV, 0, 750, 9, 2, "tick-red");
```
